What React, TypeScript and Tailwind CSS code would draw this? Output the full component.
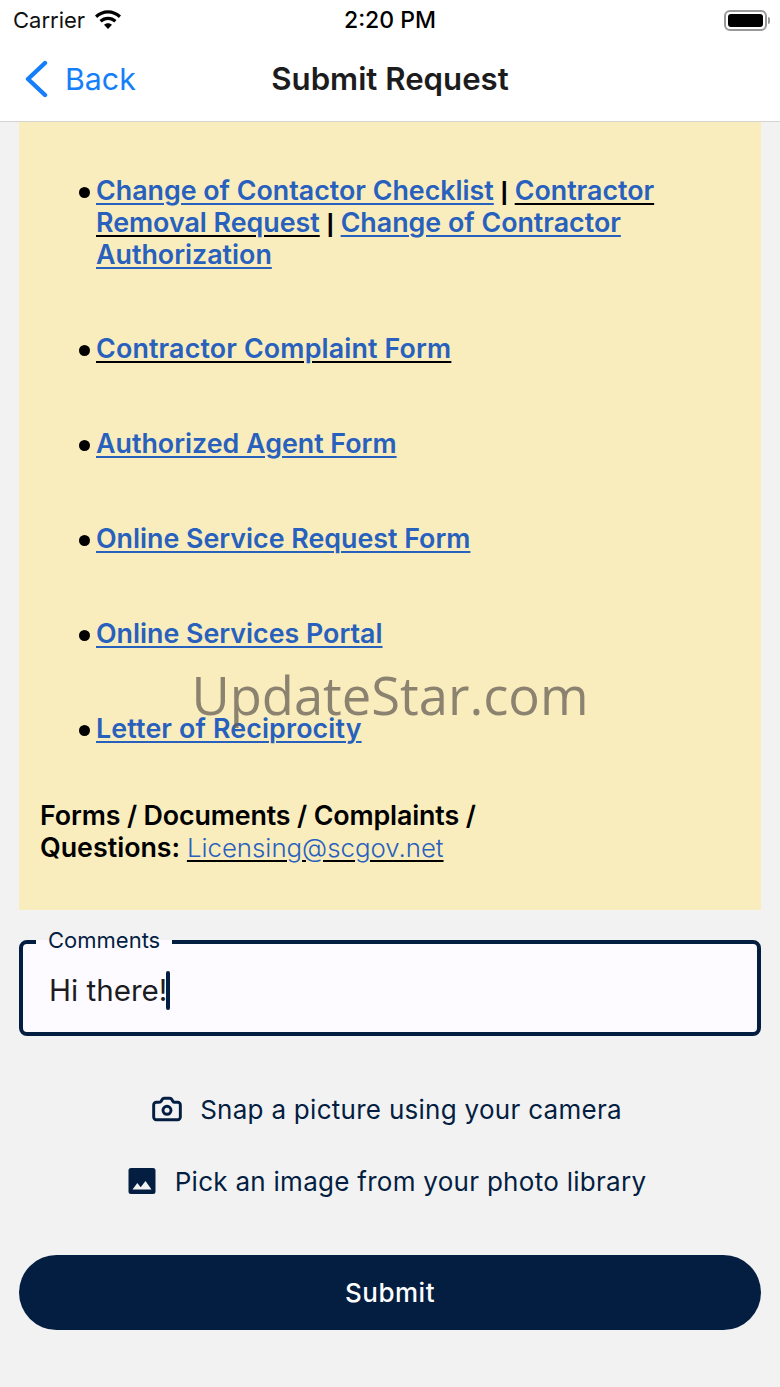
import { Camera } from "lucide-react";

const linkClass = "text-[#2860bd] underline underline-offset-[3px] decoration-2";
const bulletClass = "absolute left-[-17px] top-[12px] size-[11px] rounded-full bg-black";

const singleLinks = [
  { label: "Contractor Complaint Form", extra: "decoration-black tracking-[0.16px]" },
  { label: "Authorized Agent Form", extra: "" },
  { label: "Online Service Request Form", extra: "" },
  { label: "Online Services Portal", extra: "" },
  { label: "Letter of Reciprocity", extra: "tracking-[0.14px]" },
];

function Wifi() {
  return (
    <svg width="30" height="22" viewBox="0 0 30 22" fill="#000">
      <path d="M15 4.600c4.100 0 7.900 1.600 10.800 4.300l2.200-2.300C24.500 3.300 19.900 1.300 15 1.300S5.500 3.300 2 6.600l2.200 2.300C7.100 6.200 10.900 4.600 15 4.600z" />
      <path d="M15 11c2.400 0 4.600.9 6.300 2.400l2.200-2.300c-2.300-2.100-5.300-3.300-8.500-3.300s-6.200 1.200-8.500 3.300l2.200 2.300C10.400 11.900 12.600 11 15 11z" />
      <path d="M15 14.300c-1.500 0-2.900.6-4 1.500l4 4.200 4-4.200c-1.100-.9-2.500-1.500-4-1.500z" />
    </svg>
  );
}

function Battery() {
  return (
    <div className="flex items-center gap-px">
      <div className="flex h-[21px] w-[43px] rounded-[6px] border-2 border-[#999] p-[2px]">
        <div className="flex-1 rounded-[3px] bg-black" />
      </div>
      <div className="h-[7px] w-[2px] rounded-r-sm bg-[#999]" />
    </div>
  );
}

function Pipe() {
  return <span className="font-['Liberation_Sans',sans-serif] text-[25px] font-bold leading-[0]"> | </span>;
}

export default function App() {
  return (
    <div className="relative flex h-[1387px] w-[780px] flex-col overflow-hidden bg-[#f2f2f3] font-['Inter',sans-serif]">
      <header className="h-[122px] shrink-0 border-b border-[#d6d4d0] bg-white">
        <div className="relative flex h-[40px] items-center justify-between pl-[13px] pr-[10px]">
          <div className="flex items-center gap-[8px] text-[22px] leading-none text-[#111]">
            <span>Carrier</span>
            <Wifi />
          </div>
          <span className="absolute left-0 right-0 text-center text-[23px] font-medium leading-none text-black">
            2:20 PM
          </span>
          <Battery />
        </div>
        <div className="relative flex h-[78px] items-center pl-[23px]">
          <svg width="26" height="38" viewBox="0 0 26 38" fill="none" stroke="#147efb" strokeWidth="4.4" strokeLinecap="round" strokeLinejoin="round">
            <path d="M22 3 L5 19 L22 35" />
          </svg>
          <span className="ml-[16px] text-[30.3px] leading-none text-[#147efb]">Back</span>
          <h1 className="absolute left-0 right-0 mt-[2px] text-center text-[31.200px] font-semibold leading-none text-[#1c1c1e]">
            Submit Request
          </h1>
        </div>
      </header>

      <main className="flex flex-1 flex-col px-[19px]">
        <section className="h-[788px] bg-[#f9edbe] pt-[53.4px] pl-[21px] pr-[60px] text-[26.8px] font-semibold leading-[31.7px] text-black">
          <ul className="flex flex-col gap-[63.3px] pl-[56px]">
            <li className="relative mb-[-1px]">
              <span className={bulletClass} />
              <a className={linkClass}>Change of Contactor Checklist</a>
              <Pipe />
              <a className={`${linkClass} decoration-black`}>Contractor Removal Request</a>
              <Pipe />
              <a className={linkClass}>Change of Contractor Authorization</a>
            </li>
            {singleLinks.map(({ label, extra }) => (
              <li key={label} className="relative">
                <span className={bulletClass} />
                <a className={`${linkClass} ${extra}`}>{label}</a>
              </li>
            ))}
          </ul>
          <p className="mt-[54px] leading-[32px]">
            <span className="tracking-[-0.13px]">Forms / Documents / Complaints /</span>
            <br />
            Questions:{" "}
            <a className="text-[25.8px] font-light text-[#2860bd] underline decoration-black decoration-2 underline-offset-[3px]">
              Licensing@scgov.net
            </a>
          </p>
        </section>

        <div className="relative mt-[30px] flex h-[96px] items-center rounded-[8px] border-[4px] border-[#041e42] bg-[#fdfbff] pl-[26px] pt-[5px]">
          <span className="absolute left-[13px] top-[-4px] h-[4px] w-[136px] bg-[#fdfbff]" />
          <span className="absolute left-[25px] top-[-17px] text-[22px] leading-[26px] text-[#041e42]">
            Comments
          </span>
          <span className="text-[29.6px] leading-none text-[#1c1b1f]">Hi there!</span>
          <span className="ml-[-1px] h-[39px] w-[3.5px] rounded-sm bg-[#041e42]" />
        </div>

        <button className="mt-[53px] flex h-[40px] items-center justify-center gap-[17px] pr-[7px] text-[26px] tracking-[0.28px] text-[#041e42]">
          <Camera size={32} strokeWidth={2.2} />
          Snap a picture using your camera
        </button>
        <button className="mt-[32px] flex h-[40px] items-center justify-center gap-[19px] pr-[6px] text-[26px] tracking-[0.28px] text-[#041e42]">
          <svg width="28" height="28" viewBox="0 0 28 28" fill="#041e42">
            <path fillRule="evenodd" d="M3 1h22a2.500 2.500 0 0 1 2.500 2.500v21A2.500 2.500 0 0 1 25 27H3a2.500 2.500 0 0 1-2.500-2.500v-21A2.500 2.500 0 0 1 3 1zM4.500 22.500h19l-6-8.500-4.800 6.200-3.400-4.100z" />
          </svg>
          Pick an image from your photo library
        </button>

        <button className="mt-[54px] h-[75px] rounded-full bg-[#041e42] text-[26px] font-medium tracking-[0.5px] text-white">
          Submit
        </button>
      </main>

      <div className="pointer-events-none absolute left-0 right-0 top-[660px] text-center font-['Open_Sans',sans-serif] text-[52.5px] leading-[70px] text-[#655f55]/75">
        UpdateStar.com
      </div>
    </div>
  );
}
